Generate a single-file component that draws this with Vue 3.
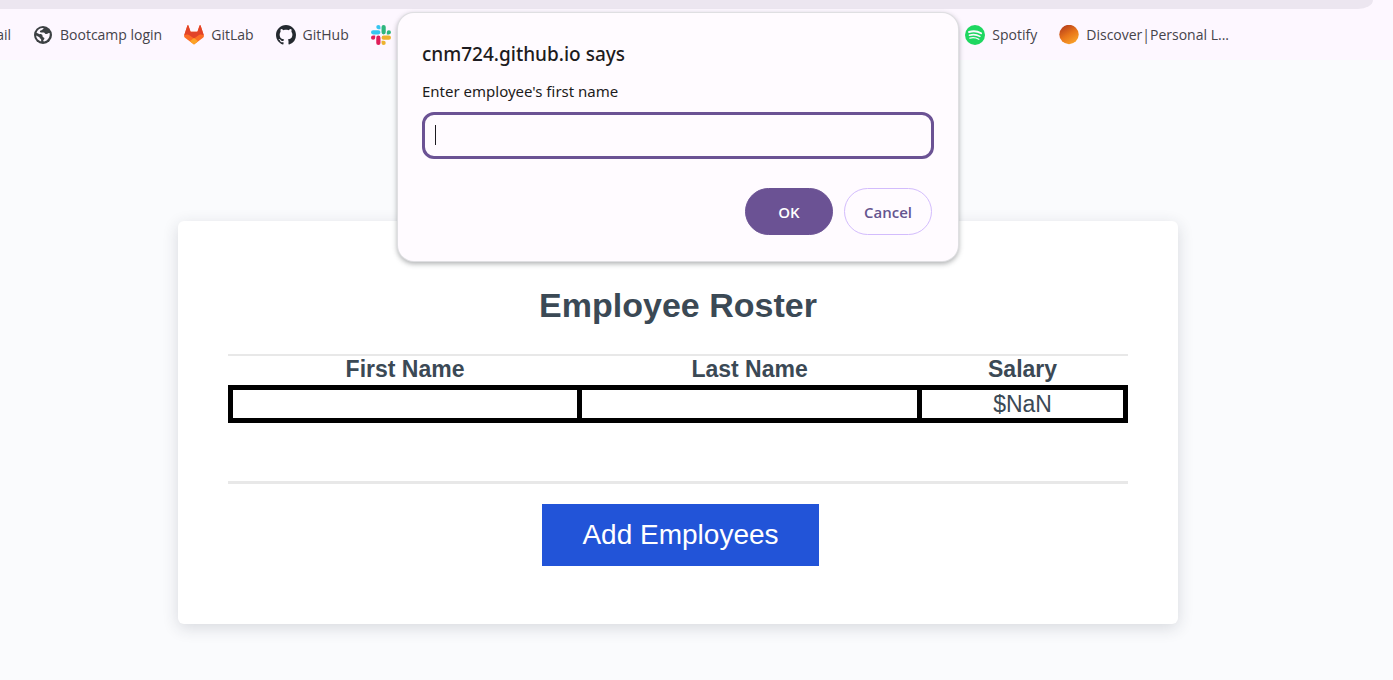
<script setup>
import { ref } from 'vue'

const firstName = ref('')
const employees = ref([{ first: '', last: '', salary: '$NaN' }])
</script>

<template>
  <div class="window">
    <header class="chrome">
      <div class="omnibox"></div>
      <nav class="bookmarks" aria-label="Bookmarks">
        <div class="group">
          <a class="bookmark" href="#">ail</a>
          <a class="bookmark" href="#">
            <svg class="icon" viewBox="0 0 20 20" aria-hidden="true">
              <circle cx="10" cy="10" r="9" fill="#3c4043" />
              <path d="M11 3.200c-1.200.3-1 1.200-1.900 1.700-.9.400-2 .3-2.200 1.300-.1.800.7 1.300 1.700 1.300h2.200c.9 0 .9 1 1.700 1.400.9.400 2.100.1 2.800-.6.500-.4 1.200-.4 1.400.1.400 3.700-1.900 7.100-5.500 8-.8.100-1.100-.3-.9-.9.200-.8 1.200-1.200 1.100-2.100-.1-1-1.300-.9-1.700-1.700-.4-.8.100-1.600-.8-2.100-.9-.5-1.800-.1-2.800-.5L3.500 7.700C4.500 4.700 7.500 2.700 11 3.200zM3.100 10.600l2.900 1.300c.8.400.6 1.100 1.200 1.700.5.500 1.100.6 1 1.400l-.1 1.500c-2.800-.7-4.900-3-5-5.900z" fill="#fdf7ff" />
            </svg>
            <span>Bootcamp login</span>
          </a>
          <a class="bookmark" href="#">
            <svg class="icon" viewBox="0 0 20 20" aria-hidden="true">
              <path d="M10 19.500 1 12.700c-.8-.6-1.100-1.600-.8-2.500L3.400.6c.2-.5.800-.5 1 0l2.200 6.200h6.800L15.600.6c.2-.5.800-.5 1 0l3.200 9.600c.3.900 0 1.900-.8 2.500z" fill="#fc6d26" />
              <path d="M.2 10.200 3.400.6c.2-.5.800-.5 1 0l2.200 6.200h6.800L15.600.6c.2-.5.800-.5 1 0l3.200 9.600-2.600-.7c-1 0-2.300.5-3.300 1.300L10 13.400 6.100 10.800c-1-.8-2.300-1.300-3.300-1.300z" fill="#e24329" />
              <path d="m10 13 4.200 3.300-4.200 3.200-4.200-3.200z" fill="#fca326" />
            </svg>
            <span>GitLab</span>
          </a>
          <a class="bookmark" href="#">
            <svg class="icon" viewBox="0 0 16 16" aria-hidden="true">
              <path d="M8 0C3.580 0 0 3.580 0 8c0 3.540 2.290 6.530 5.470 7.590.4.070.55-.17.55-.38 0-.19-.01-.82-.01-1.490-2.010.37-2.530-.49-2.690-.94-.09-.23-.48-.94-.82-1.130-.28-.15-.68-.52-.01-.53.63-.01 1.080.58 1.230.82.72 1.210 1.870.87 2.330.66.070-.52.28-.87.51-1.070-1.780-.2-3.640-.89-3.640-3.950 0-.87.31-1.590.82-2.150-.08-.2-.36-1.020.08-2.120 0 0 .67-.21 2.200.82.64-.18 1.320-.27 2-.27s1.360.09 2 .27c1.530-1.040 2.200-.82 2.200-.82.44 1.100.16 1.920.08 2.120.51.56.82 1.270.82 2.150 0 3.070-1.870 3.750-3.650 3.950.29.25.54.73.54 1.480 0 1.070-.01 1.930-.01 2.200 0 .21.15.46.55.38A8.010 8.010 0 0 0 16 8c0-4.420-3.580-8-8-8z" fill="#24292f" />
            </svg>
            <span>GitHub</span>
          </a>
          <a class="bookmark" href="#" aria-label="Slack">
            <svg class="icon" viewBox="0 0 24 24" aria-hidden="true">
              <path d="M5.042 15.165a2.528 2.528 0 0 1-2.520 2.523A2.528 2.528 0 0 1 0 15.165a2.527 2.527 0 0 1 2.522-2.520h2.520zM6.313 15.165a2.527 2.527 0 0 1 2.521-2.520 2.527 2.527 0 0 1 2.521 2.520v6.313A2.528 2.528 0 0 1 8.834 24a2.528 2.528 0 0 1-2.521-2.522z" fill="#e01e5a" />
              <path d="M8.834 5.042a2.528 2.528 0 0 1-2.521-2.520A2.528 2.528 0 0 1 8.834 0a2.528 2.528 0 0 1 2.521 2.522v2.520zM8.834 6.313a2.528 2.528 0 0 1 2.521 2.521 2.528 2.528 0 0 1-2.521 2.521H2.522A2.528 2.528 0 0 1 0 8.834a2.528 2.528 0 0 1 2.522-2.521z" fill="#36c5f0" />
              <path d="M18.956 8.834a2.528 2.528 0 0 1 2.522-2.521A2.528 2.528 0 0 1 24 8.834a2.528 2.528 0 0 1-2.522 2.521h-2.522zM17.688 8.834a2.528 2.528 0 0 1-2.523 2.521 2.527 2.527 0 0 1-2.520-2.521V2.522A2.527 2.527 0 0 1 15.165 0a2.528 2.528 0 0 1 2.523 2.522z" fill="#2eb67d" />
              <path d="M15.165 18.956a2.528 2.528 0 0 1 2.523 2.522A2.528 2.528 0 0 1 15.165 24a2.527 2.527 0 0 1-2.520-2.522v-2.522zM15.165 17.688a2.527 2.527 0 0 1-2.520-2.523 2.526 2.526 0 0 1 2.520-2.520h6.313A2.527 2.527 0 0 1 24 15.165a2.528 2.528 0 0 1-2.522 2.523z" fill="#ecb22e" />
            </svg>
          </a>
        </div>
        <div class="group">
          <a class="bookmark" href="#">
            <svg class="icon" viewBox="0 0 20 20" aria-hidden="true">
              <circle cx="10" cy="10" r="10" fill="#1ed760" />
              <g fill="none" stroke="#fdf7ff" stroke-linecap="round">
                <path d="M4 7c4-1.200 8.600-.8 12.100 1.200" stroke-width="1.900" />
                <path d="M4.500 10.200c3.500-1 7.400-.6 10.400 1.200" stroke-width="1.600" />
                <path d="M4.900 13.100c3-.7 6.200-.4 8.900 1.200" stroke-width="1.300" />
              </g>
            </svg>
            <span>Spotify</span>
          </a>
          <a class="bookmark" href="#">
            <svg class="icon" viewBox="0 0 20 20" aria-hidden="true">
              <defs>
                <linearGradient id="sunset" x1="0.200" y1="0" x2="0.800" y2="1">
                  <stop offset="0" stop-color="#b43b1b" />
                  <stop offset="0.500" stop-color="#e8751a" />
                  <stop offset="1" stop-color="#fba82c" />
                </linearGradient>
              </defs>
              <circle cx="10" cy="9.500" r="9.700" fill="url(#sunset)" />
            </svg>
            <span>Discover|Personal L...</span>
          </a>
        </div>
      </nav>
    </header>

    <main class="page">
      <section class="card">
        <h1>Employee Roster</h1>
        <div class="roster">
          <table>
            <colgroup>
              <col class="col-first" />
              <col class="col-last" />
              <col class="col-salary" />
            </colgroup>
            <thead>
              <tr>
                <th scope="col">First Name</th>
                <th scope="col">Last Name</th>
                <th scope="col">Salary</th>
              </tr>
            </thead>
            <tbody>
              <tr v-for="(employee, i) in employees" :key="i">
                <td>{{ employee.first }}</td>
                <td>{{ employee.last }}</td>
                <td>{{ employee.salary }}</td>
              </tr>
            </tbody>
          </table>
        </div>
        <button class="add" type="button">Add Employees</button>
      </section>
    </main>

    <div class="overlay">
      <form class="prompt" role="dialog" aria-labelledby="prompt-title" @submit.prevent>
        <h2 id="prompt-title">cnm724.github.io says</h2>
        <label for="prompt-input">Enter employee's first name</label>
        <div class="field">
          <input id="prompt-input" v-model="firstName" type="text" autocomplete="off" />
          <span v-if="!firstName" class="caret"></span>
        </div>
        <div class="actions">
          <button class="ok" type="submit">OK</button>
          <button class="cancel" type="button">Cancel</button>
        </div>
      </form>
    </div>
  </div>
</template>

<style>
body {
  background: #fafbfd;
}
</style>

<style scoped>
* {
  box-sizing: border-box;
}

.window {
  position: relative;
  min-height: 100vh;
  overflow: hidden;
  background: #fafbfd;
  font-family: "Liberation Sans", Arial, sans-serif;
}

.chrome {
  height: 60px;
  background: #fdf7ff;
  font-family: "Open Sans", "Noto Sans", sans-serif;
}

.omnibox {
  height: 9px;
  margin-right: 20px;
  background: #ece6f0;
  border-bottom-right-radius: 20px 12px;
}

.bookmarks {
  display: flex;
  justify-content: space-between;
  padding: 16px 164px 0 0;
}

.group {
  display: flex;
  gap: 22px;
}

.bookmark {
  display: flex;
  align-items: center;
  gap: 7px;
  height: 20px;
  color: #45434a;
  font-size: 14px;
  line-height: 20px;
  text-decoration: none;
  white-space: nowrap;
}

.group:first-child .bookmark:first-child {
  width: 11px;
  justify-content: flex-end;
}

.icon {
  width: 20px;
  height: 20px;
  flex: none;
}

.page {
  padding: 161px 37px 56px 0;
}

.card {
  display: flex;
  flex-direction: column;
  align-items: center;
  max-width: 1000px;
  margin: 0 auto;
  padding: 64px 50px 58px;
  background: #fff;
  border-radius: 6px;
  box-shadow: 0 4px 16px rgba(40, 45, 60, 0.16);
  color: #3b4955;
}

h1 {
  margin: 0 0 28px;
  font-size: 34px;
  line-height: 41px;
}

.roster {
  width: 100%;
  min-height: 130px;
  margin-bottom: 20px;
  border-top: 2px solid #e8e8e8;
  border-bottom: 3px solid #e8e8e8;
}

table {
  width: 100%;
  table-layout: fixed;
  border-collapse: collapse;
  font-size: 23px;
  line-height: 26px;
  text-align: center;
}

.col-first {
  width: 39%;
}

.col-last {
  width: 38%;
}

.col-salary {
  width: 23%;
}

th {
  height: 31px;
  padding: 0 0 3px;
}

td {
  height: 33px;
  padding: 0;
  border: 5px solid #000;
}

.add {
  padding: 14px 40px;
  margin-left: 5px;
  border: 0;
  background: #2254d8;
  color: #fff;
  font-family: inherit;
  font-size: 28px;
  line-height: 34px;
}

.overlay {
  position: absolute;
  top: 13px;
  left: 0;
  right: 37px;
  display: flex;
  justify-content: center;
}

.prompt {
  width: 560px;
  padding: 26px 24px;
  border-radius: 16px;
  background: #fffbff;
  box-shadow: 0 0 0 1px #dfdfe2, 0 2px 5px 1px rgba(60, 64, 67, 0.4);
  color: #1d1b20;
  font-family: "Open Sans", "Noto Sans", sans-serif;
}

h2 {
  margin: 0 0 11px;
  font-family: "Noto Sans", "Open Sans", sans-serif;
  font-size: 19px;
  font-weight: 500;
  line-height: 30px;
}

label {
  display: block;
  margin-bottom: 10px;
  font-family: "Noto Sans", "Open Sans", sans-serif;
  font-size: 15px;
  line-height: 22px;
}

.field {
  position: relative;
  margin-bottom: 29px;
}

input {
  display: block;
  width: 100%;
  height: 47px;
  padding: 0 12px;
  border: 3px solid #6b5294;
  border-radius: 12px;
  outline: 0;
  background: transparent;
  color: inherit;
  font-family: inherit;
  font-size: 16px;
}

.caret {
  position: absolute;
  top: 13px;
  left: 13px;
  width: 1px;
  height: 20px;
  background: #1d1b20;
}

.actions {
  display: flex;
  justify-content: flex-end;
  gap: 11px;
  padding-right: 2px;
}

.actions button {
  width: 88px;
  height: 47px;
  padding: 0;
  border: 1px solid #6b5294;
  border-radius: 24px;
  font-family: inherit;
  font-size: 15px;
  font-weight: 600;
}

.ok {
  background: #6b5294;
  color: #fff;
}

.actions .cancel {
  border-color: #d3bcfd;
  background: transparent;
  color: #65558f;
}
</style>
